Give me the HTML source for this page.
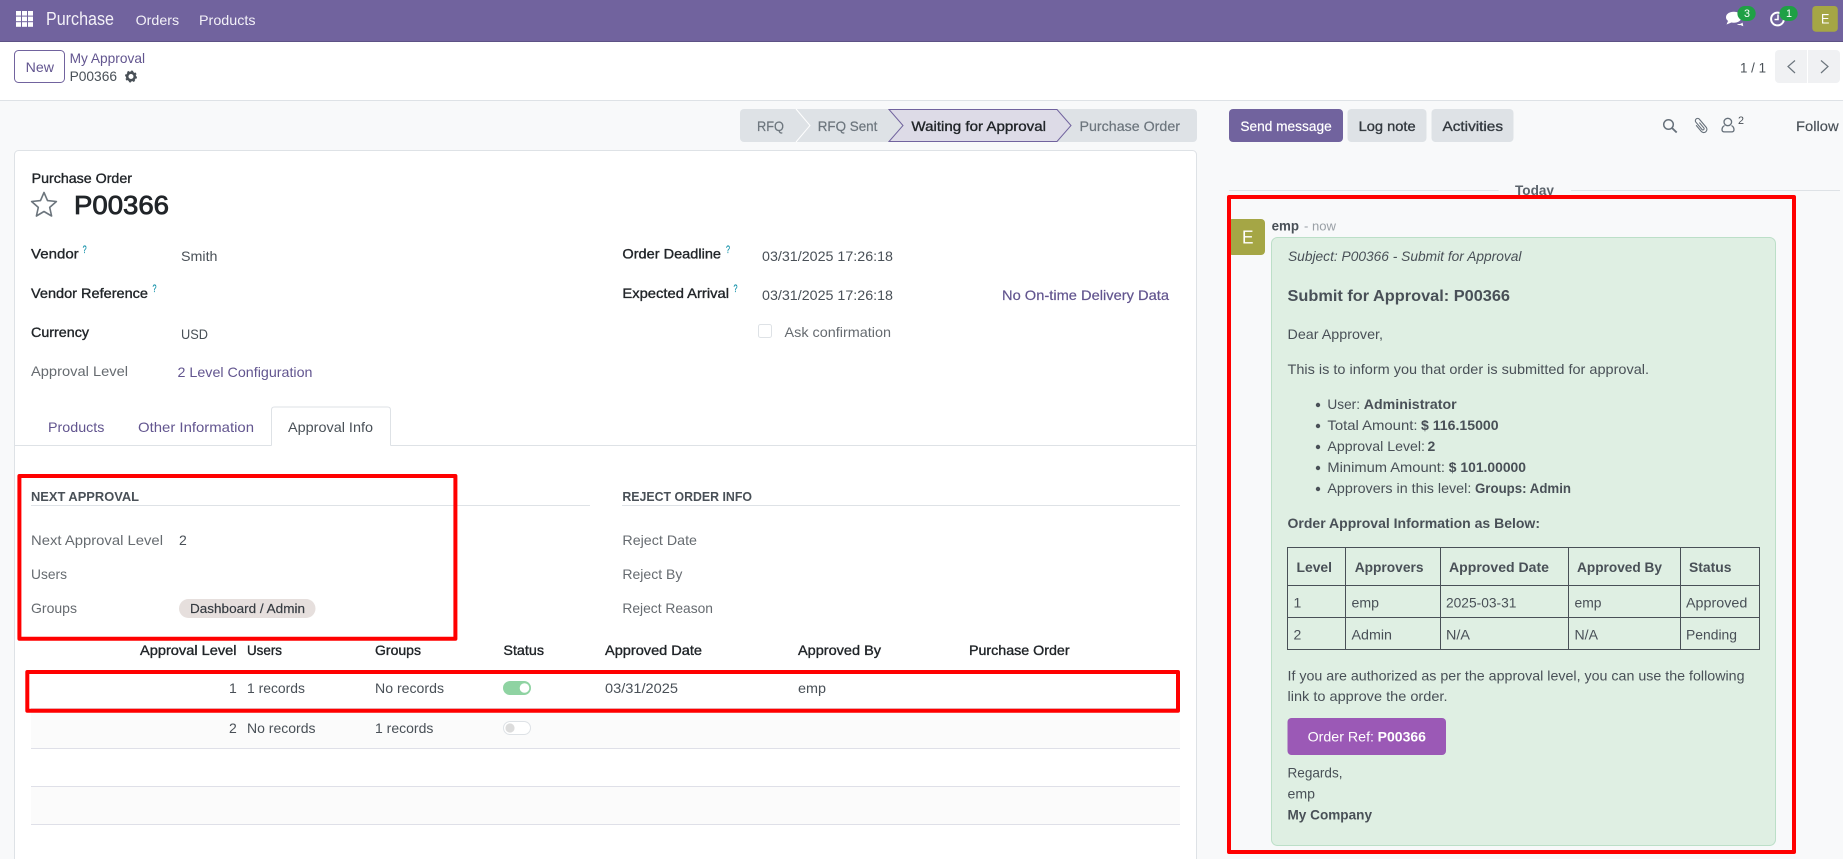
<!DOCTYPE html>
<html><head><meta charset="utf-8"><title>P00366</title>
<style>
html,body{margin:0;padding:0;width:1843px;height:859px;overflow:hidden;background:#f8f9fa}
svg{display:block;position:absolute;left:0;top:0}
text{font-family:"Liberation Sans",sans-serif;font-size:14px;fill:#495057;white-space:pre}
.m{fill:#212529;stroke:#212529;stroke-width:.35}
.g{fill:#666b70}
.l{fill:#62558f}
.h{font-weight:700}
.w{fill:#fff}
.n{fill:#f3f1f8}
.t{fill:#495057}
.b{font-weight:700;fill:#495057}
.q{font-size:11px;fill:#0f8fa8;stroke:#0f8fa8;stroke-width:.2}
</style></head><body>
<svg width="1843" height="859" viewBox="0 0 1843 859" xmlns="http://www.w3.org/2000/svg">
<rect width="1843" height="859" fill="#f8f9fa"/>
<!-- navbar -->
<rect width="1843" height="41" fill="#71639e"/>
<rect y="41" width="1843" height="1" fill="#5d5285"/>
<g fill="#fff">
<rect x="16" y="11" width="5" height="4.6"/><rect x="22" y="11" width="5" height="4.6"/><rect x="28" y="11" width="5" height="4.6"/>
<rect x="16" y="16.6" width="5" height="4.6"/><rect x="22" y="16.6" width="5" height="4.6"/><rect x="28" y="16.6" width="5" height="4.6"/>
<rect x="16" y="22.2" width="5" height="4.6"/><rect x="22" y="22.2" width="5" height="4.6"/><rect x="28" y="22.2" width="5" height="4.6"/>
</g>
<text class="n" x="46" y="25" style="font-size:18px" textLength="68" lengthAdjust="spacingAndGlyphs">Purchase</text>
<text class="n" x="135.6" y="25" textLength="43.5" lengthAdjust="spacingAndGlyphs">Orders</text>
<text class="n" x="199" y="25" textLength="56.5" lengthAdjust="spacingAndGlyphs">Products</text>
<!-- nav right icons -->
<g fill="#fff">
<ellipse cx="1733.8" cy="17.2" rx="7.8" ry="5.5"/>
<path d="M1728 21l-1.5 3.5 5-2z"/>
<path d="M1737 24c2.5.5 4.5-.3 5.5-1.5l.8 3.7-3-1.2c-1.3.3-2.5 0-3.3-1z"/>
</g>
<circle cx="1777.5" cy="19" r="6.4" fill="none" stroke="#fff" stroke-width="2"/>
<path d="M1778 14.5v5h-3.5" fill="none" stroke="#fff" stroke-width="1.5"/>
<rect x="1737.4" y="6" width="18.3" height="15" rx="7.5" fill="#1fa045"/>
<rect x="1779.4" y="6" width="18.3" height="15" rx="7.5" fill="#1fa045"/>
<text class="w" x="1744" y="17" style="font-size:11px" textLength="6" lengthAdjust="spacingAndGlyphs">3</text>
<text class="w" x="1786" y="17" style="font-size:11px" textLength="6" lengthAdjust="spacingAndGlyphs">1</text>
<rect x="1812.3" y="6" width="25.5" height="25.7" rx="3.5" fill="#a5a645"/>
<text class="w" x="1821" y="23.5" textLength="8.4" lengthAdjust="spacingAndGlyphs">E</text>
<!-- control panel -->
<rect y="42" width="1843" height="58" fill="#fff"/>
<rect y="100" width="1843" height="1" fill="#dee2e6"/>
<rect x="14.5" y="50.5" width="50" height="32" rx="4" fill="#fff" stroke="#71639e"/>
<text class="l" x="25.7" y="72" textLength="28.3" lengthAdjust="spacingAndGlyphs">New</text>
<text class="l" x="69.6" y="63" textLength="75.4" lengthAdjust="spacingAndGlyphs">My Approval</text>
<text class="t" x="69.6" y="81" textLength="47.4" lengthAdjust="spacingAndGlyphs">P00366</text>
<circle cx="131" cy="76.5" r="3.8" fill="none" stroke="#495057" stroke-width="2.6"/>
<circle cx="131" cy="76.5" r="5.2" fill="none" stroke="#495057" stroke-width="1.6" stroke-dasharray="2 2.08"/>
<text class="t" x="1740" y="72.5" textLength="26" lengthAdjust="spacingAndGlyphs">1 / 1</text>
<path d="M1775 54a4 4 0 0 1 4-4h28v33h-28a4 4 0 0 1-4-4z" fill="#f0f1f3"/>
<path d="M1808 50h28a4 4 0 0 1 4 4v25a4 4 0 0 1-4 4h-28z" fill="#f0f1f3"/>
<path d="M1795 60.5l-7 6 7 6.5" fill="none" stroke="#6c757d" stroke-width="1.2"/>
<path d="M1821 60.5l7 6-7 6.5" fill="none" stroke="#6c757d" stroke-width="1.2"/>
<!-- statusbar -->
<rect x="740" y="109" width="457" height="33" rx="4" fill="#dee2e6"/>
<path d="M796 109l14 16.5-14 16.5" fill="none" stroke="#fff" stroke-width="1"/>
<polygon points="889,109.5 1057,109.5 1071,125.5 1057,141.5 889,141.5 903,125.5" fill="#dddbe7" stroke="#71639e" stroke-width="1"/>
<text x="757" y="131" style="fill:#6c757d;stroke:#6c757d;stroke-width:.2" textLength="27" lengthAdjust="spacingAndGlyphs">RFQ</text>
<text x="817.7" y="131" style="fill:#6c757d;stroke:#6c757d;stroke-width:.2" textLength="59.7" lengthAdjust="spacingAndGlyphs">RFQ Sent</text>
<text class="m" x="911.4" y="131" textLength="134.6" lengthAdjust="spacingAndGlyphs">Waiting for Approval</text>
<text x="1079.5" y="131" style="fill:#6c757d;stroke:#6c757d;stroke-width:.2" textLength="100.5" lengthAdjust="spacingAndGlyphs">Purchase Order</text>
<!-- sheet -->
<rect x="14.5" y="150.5" width="1182" height="740" rx="4" fill="#fff" stroke="#dee2e6"/>
<text class="m" x="31.6" y="183" textLength="100.4" lengthAdjust="spacingAndGlyphs">Purchase Order</text>
<polygon points="44,192.5 47.5,200.6 56.4,201.5 49.7,207.4 51.6,216 44,211.5 36.4,216 38.3,207.4 31.6,201.5 40.5,200.6" fill="none" stroke="#6c757d" stroke-width="1.6" stroke-linejoin="round"/>
<text x="74" y="214" style="font-size:26px;fill:#212529;stroke:#212529;stroke-width:.8" textLength="95" lengthAdjust="spacingAndGlyphs">P00366</text>
<text class="m" x="31" y="258.7" textLength="47.7" lengthAdjust="spacingAndGlyphs">Vendor</text><text class="q" x="82.6" y="253" textLength="4" lengthAdjust="spacingAndGlyphs">?</text>
<text class="t" x="181" y="261" textLength="36.5" lengthAdjust="spacingAndGlyphs">Smith</text>
<text class="m" x="31" y="298" textLength="117" lengthAdjust="spacingAndGlyphs">Vendor Reference</text><text class="q" x="152.5" y="292" textLength="4" lengthAdjust="spacingAndGlyphs">?</text>
<text class="m" x="31" y="337" textLength="58" lengthAdjust="spacingAndGlyphs">Currency</text>
<text class="t" x="181" y="339" textLength="27" lengthAdjust="spacingAndGlyphs">USD</text>
<text class="g" x="31" y="376" textLength="97" lengthAdjust="spacingAndGlyphs">Approval Level</text>
<text class="l" x="177.5" y="377" textLength="135" lengthAdjust="spacingAndGlyphs">2 Level Configuration</text>
<text class="m" x="622.4" y="258.7" textLength="98.6" lengthAdjust="spacingAndGlyphs">Order Deadline</text><text class="q" x="726" y="253" textLength="4" lengthAdjust="spacingAndGlyphs">?</text>
<text class="t" x="762" y="261" textLength="131" lengthAdjust="spacingAndGlyphs">03/31/2025 17:26:18</text>
<text class="m" x="622.4" y="298" textLength="106.6" lengthAdjust="spacingAndGlyphs">Expected Arrival</text><text class="q" x="733.5" y="292" textLength="4" lengthAdjust="spacingAndGlyphs">?</text>
<text class="t" x="762" y="300" textLength="131" lengthAdjust="spacingAndGlyphs">03/31/2025 17:26:18</text>
<text class="l" style="stroke:#62558f;stroke-width:.2" x="1002" y="300" textLength="167" lengthAdjust="spacingAndGlyphs">No On-time Delivery Data</text>
<rect x="758.5" y="324.5" width="13" height="13" rx="2" fill="#fff" stroke="#dee2e6"/>
<text class="g" x="784.5" y="337" textLength="106.5" lengthAdjust="spacingAndGlyphs">Ask confirmation</text>
<!-- tabs -->
<rect x="15" y="445" width="1181" height="1" fill="#dee2e6"/>
<path d="M271.5 446V410q0-3 3-3H387.5q3 0 3 3V446" fill="#fff" stroke="none"/>
<path d="M271.5 445.5V410q0-3 3-3H387.5q3 0 3 3V445.5" fill="none" stroke="#dee2e6"/>
<text class="l" x="48" y="432" textLength="56.4" lengthAdjust="spacingAndGlyphs">Products</text>
<text class="l" x="138" y="432" textLength="116" lengthAdjust="spacingAndGlyphs">Other Information</text>
<text class="t" x="288" y="432" textLength="85" lengthAdjust="spacingAndGlyphs">Approval Info</text>
<!-- groups -->
<text class="b" x="31" y="501" style="font-size:13px" textLength="108" lengthAdjust="spacingAndGlyphs">NEXT APPROVAL</text>
<rect x="31" y="505" width="559" height="1" fill="#dee2e6"/>
<text class="g" x="31" y="545" textLength="132" lengthAdjust="spacingAndGlyphs">Next Approval Level</text>
<text class="t" x="179" y="545" textLength="7.8" lengthAdjust="spacingAndGlyphs">2</text>
<text class="g" x="31" y="579" textLength="36" lengthAdjust="spacingAndGlyphs">Users</text>
<text class="g" x="31" y="613" textLength="46" lengthAdjust="spacingAndGlyphs">Groups</text>
<rect x="179" y="599" width="136.5" height="19" rx="9.5" fill="#e6dfdd"/>
<text x="190" y="613" style="font-size:13px;fill:#343a40;stroke:#343a40;stroke-width:.15" textLength="115" lengthAdjust="spacingAndGlyphs">Dashboard / Admin</text>
<text class="b" x="622.4" y="501" style="font-size:13px" textLength="129.6" lengthAdjust="spacingAndGlyphs">REJECT ORDER INFO</text>
<rect x="622" y="505" width="558" height="1" fill="#dee2e6"/>
<text class="g" x="622.4" y="545" textLength="74.6" lengthAdjust="spacingAndGlyphs">Reject Date</text>
<text class="g" x="622.4" y="579" textLength="60" lengthAdjust="spacingAndGlyphs">Reject By</text>
<text class="g" x="622.4" y="613" textLength="90.6" lengthAdjust="spacingAndGlyphs">Reject Reason</text>
<!-- list -->
<text class="m" x="140" y="655" textLength="96.5" lengthAdjust="spacingAndGlyphs">Approval Level</text>
<text class="m" x="247" y="655" textLength="35" lengthAdjust="spacingAndGlyphs">Users</text>
<text class="m" x="375" y="655" textLength="46" lengthAdjust="spacingAndGlyphs">Groups</text>
<text class="m" x="503.4" y="655" textLength="40.6" lengthAdjust="spacingAndGlyphs">Status</text>
<text class="m" x="605" y="655" textLength="97" lengthAdjust="spacingAndGlyphs">Approved Date</text>
<text class="m" x="798" y="655" textLength="83" lengthAdjust="spacingAndGlyphs">Approved By</text>
<text class="m" x="969" y="655" textLength="100.6" lengthAdjust="spacingAndGlyphs">Purchase Order</text>
<rect x="31" y="709" width="1149" height="39" fill="#fbfbfb"/>
<rect x="31" y="786" width="1149" height="38" fill="#fbfbfb"/>
<rect x="31" y="708" width="1149" height="1" fill="#dfe0e8"/>
<rect x="31" y="748" width="1149" height="1" fill="#dfe0e8"/>
<rect x="31" y="786" width="1149" height="1" fill="#dfe0e8"/>
<rect x="31" y="824" width="1149" height="1" fill="#dfe0e8"/>
<text class="t" x="229" y="693" textLength="7.8" lengthAdjust="spacingAndGlyphs">1</text>
<text class="t" x="247" y="693" textLength="58" lengthAdjust="spacingAndGlyphs">1 records</text>
<text class="t" x="375" y="693" textLength="69" lengthAdjust="spacingAndGlyphs">No records</text>
<rect x="503" y="681" width="28" height="14" rx="7" fill="#8fd3a2"/>
<circle cx="524.5" cy="688" r="4.8" fill="#fff"/>
<text class="t" x="605" y="693" textLength="73" lengthAdjust="spacingAndGlyphs">03/31/2025</text>
<text class="t" x="798" y="693" textLength="28" lengthAdjust="spacingAndGlyphs">emp</text>
<text class="t" x="229" y="733" textLength="7.8" lengthAdjust="spacingAndGlyphs">2</text>
<text class="t" x="247" y="733" textLength="68.5" lengthAdjust="spacingAndGlyphs">No records</text>
<text class="t" x="375" y="733" textLength="58.4" lengthAdjust="spacingAndGlyphs">1 records</text>
<rect x="503.5" y="721.5" width="27" height="13" rx="6.5" fill="#fff" stroke="#dee2e6"/>
<circle cx="510" cy="728" r="4.6" fill="#dcdcdc"/>
<!-- chatter -->
<rect x="1229" y="109" width="114" height="33" rx="4" fill="#71639e"/>
<text class="w" x="1240.4" y="131" style="stroke:#fff;stroke-width:.2" textLength="91.3" lengthAdjust="spacingAndGlyphs">Send message</text>
<rect x="1347.5" y="109" width="79" height="33" rx="4" fill="#dee2e6"/>
<text class="m" style="fill:#343a40;stroke:#343a40" x="1358.6" y="131" textLength="57" lengthAdjust="spacingAndGlyphs">Log note</text>
<rect x="1431.5" y="109" width="82" height="33" rx="4" fill="#dee2e6"/>
<text class="m" style="fill:#343a40;stroke:#343a40" x="1442.5" y="131" textLength="60.5" lengthAdjust="spacingAndGlyphs">Activities</text>
<circle cx="1668.5" cy="124.5" r="4.8" fill="none" stroke="#66707a" stroke-width="1.5"/>
<path d="M1672 128l4.7 4.5" stroke="#66707a" stroke-width="1.9"/>
<g transform="translate(1700.5 125.5) rotate(-40)"><path d="M-3.2 -3V5a3.2 3.2 0 0 0 6.4 0V-5.5a2.3 2.3 0 0 0-4.6 0V4a1.2 1.2 0 0 0 2.4 0V-3" fill="none" stroke="#66707a" stroke-width="1.1"/></g>
<ellipse cx="1727.8" cy="122" rx="3.8" ry="3.7" fill="none" stroke="#66707a" stroke-width="1.3"/>
<path d="M1724.5 125.5q-2.5 1.5-2.5 4q0 2.4 2.4 2.4h7.2q2.4 0 2.4-2.4q0-2.5-2.5-4" fill="none" stroke="#66707a" stroke-width="1.3"/>
<text class="t" x="1738" y="124" style="font-size:11px" textLength="6" lengthAdjust="spacingAndGlyphs">2</text>
<text class="t" x="1796" y="131" style="stroke:#495057;stroke-width:.15" textLength="42.6" lengthAdjust="spacingAndGlyphs">Follow</text>
<!-- Today -->
<rect x="1229" y="190" width="269.6" height="1" fill="#dee2e6"/>
<rect x="1571" y="190" width="269" height="1" fill="#dee2e6"/>
<text x="1515" y="195" style="font-weight:700;fill:#5b636b" textLength="39" lengthAdjust="spacingAndGlyphs">Today</text>
<!-- message -->
<rect x="1228" y="219" width="37" height="36" rx="4" fill="#a5a645"/>
<text class="w" x="1242" y="243.7" style="font-size:18px" textLength="11.5" lengthAdjust="spacingAndGlyphs">E</text>
<text class="b" x="1271.6" y="230.7" textLength="27.4" lengthAdjust="spacingAndGlyphs">emp</text>
<text x="1304" y="230.7" style="font-size:13px;fill:#9aa0a6" textLength="32" lengthAdjust="spacingAndGlyphs">- now</text>
<rect x="1271.5" y="237.5" width="504" height="608" rx="6" fill="#dfefe3" stroke="#bcdfc8"/>
<text class="t" x="1288" y="261" style="font-style:italic" textLength="233.5" lengthAdjust="spacingAndGlyphs">Subject: P00366 - Submit for Approval</text>
<text class="b" x="1287.5" y="301" style="font-size:16px" textLength="222.5" lengthAdjust="spacingAndGlyphs">Submit for Approval: P00366</text>
<text class="t" x="1287.5" y="339" textLength="95.5" lengthAdjust="spacingAndGlyphs">Dear Approver,</text>
<text class="t" x="1287.5" y="374" textLength="361.5" lengthAdjust="spacingAndGlyphs">This is to inform you that order is submitted for approval.</text>
<g fill="#495057"><circle cx="1318" cy="405" r="2.2"/><circle cx="1318" cy="426" r="2.2"/><circle cx="1318" cy="447" r="2.2"/><circle cx="1318" cy="468" r="2.2"/><circle cx="1318" cy="489" r="2.2"/></g>
<text class="t" x="1327.4" y="409" textLength="32.6" lengthAdjust="spacingAndGlyphs">User:</text>
<text class="b" x="1363.8" y="409" textLength="92.9" lengthAdjust="spacingAndGlyphs">Administrator</text>
<text class="t" x="1327.4" y="430" textLength="90.1" lengthAdjust="spacingAndGlyphs">Total Amount:</text>
<text class="b" x="1421" y="430" textLength="77.6" lengthAdjust="spacingAndGlyphs">$ 116.15000</text>
<text class="t" x="1327.4" y="451" textLength="97.6" lengthAdjust="spacingAndGlyphs">Approval Level:</text>
<text class="b" x="1427.5" y="451" textLength="7.8" lengthAdjust="spacingAndGlyphs">2</text>
<text class="t" x="1327.4" y="472" textLength="117.6" lengthAdjust="spacingAndGlyphs">Minimum Amount:</text>
<text class="b" x="1448.8" y="472" textLength="77.2" lengthAdjust="spacingAndGlyphs">$ 101.00000</text>
<text class="t" x="1327.4" y="493" textLength="143.9" lengthAdjust="spacingAndGlyphs">Approvers in this level:</text>
<text class="b" x="1475" y="493" textLength="96" lengthAdjust="spacingAndGlyphs">Groups: Admin</text>
<text class="b" x="1287.5" y="528" textLength="252.5" lengthAdjust="spacingAndGlyphs">Order Approval Information as Below:</text>
<g fill="none" stroke="#495057" stroke-width="1">
<rect x="1287.5" y="547.5" width="472" height="102"/>
<path d="M1287.5 585.5H1759.5M1287.5 617.5H1759.5M1345.5 547.5V649.5M1440.5 547.5V649.5M1568.5 547.5V649.5M1680.5 547.5V649.5"/>
</g>
<text class="b" x="1296.5" y="572" textLength="35.5" lengthAdjust="spacingAndGlyphs">Level</text>
<text class="b" x="1354.7" y="572" textLength="68.8" lengthAdjust="spacingAndGlyphs">Approvers</text>
<text class="b" x="1449" y="572" textLength="100" lengthAdjust="spacingAndGlyphs">Approved Date</text>
<text class="b" x="1577" y="572" textLength="85" lengthAdjust="spacingAndGlyphs">Approved By</text>
<text class="b" x="1689" y="572" textLength="42.5" lengthAdjust="spacingAndGlyphs">Status</text>
<text class="t" x="1293.5" y="607.3" textLength="7.8" lengthAdjust="spacingAndGlyphs">1</text>
<text class="t" x="1351.5" y="607.3" textLength="27.5" lengthAdjust="spacingAndGlyphs">emp</text>
<text class="t" x="1446" y="607.3" textLength="70.4" lengthAdjust="spacingAndGlyphs">2025-03-31</text>
<text class="t" x="1574.5" y="607.3" textLength="27" lengthAdjust="spacingAndGlyphs">emp</text>
<text class="t" x="1686" y="607.3" textLength="61.3" lengthAdjust="spacingAndGlyphs">Approved</text>
<text class="t" x="1293.5" y="639.3" textLength="7.8" lengthAdjust="spacingAndGlyphs">2</text>
<text class="t" x="1351.5" y="639.3" textLength="40.5" lengthAdjust="spacingAndGlyphs">Admin</text>
<text class="t" x="1446" y="639.3" textLength="24" lengthAdjust="spacingAndGlyphs">N/A</text>
<text class="t" x="1574.5" y="639.3" textLength="23.5" lengthAdjust="spacingAndGlyphs">N/A</text>
<text class="t" x="1686" y="639.3" textLength="51" lengthAdjust="spacingAndGlyphs">Pending</text>
<text class="t" x="1287.5" y="680.3" textLength="457" lengthAdjust="spacingAndGlyphs">If you are authorized as per the approval level, you can use the following</text>
<text class="t" x="1287.5" y="701" textLength="160" lengthAdjust="spacingAndGlyphs">link to approve the order.</text>
<rect x="1287.5" y="718" width="158.5" height="37" rx="4" fill="#9b59b6"/>
<text class="w" x="1307.6" y="741.7" textLength="66.4" lengthAdjust="spacingAndGlyphs">Order Ref:</text>
<text class="w" x="1377.6" y="741.7" style="font-weight:700" textLength="48.4" lengthAdjust="spacingAndGlyphs">P00366</text>
<text class="t" x="1287.5" y="777.3" textLength="55" lengthAdjust="spacingAndGlyphs">Regards,</text>
<text class="t" x="1287.5" y="798.3" textLength="27.5" lengthAdjust="spacingAndGlyphs">emp</text>
<text class="b" x="1287.5" y="819.3" textLength="84.5" lengthAdjust="spacingAndGlyphs">My Company</text>
<!-- red annotations -->
<g fill="none" stroke="#ff0000" stroke-width="4" stroke-linejoin="round">
<rect x="19.4" y="476" width="436" height="162.7"/>
<rect x="27.3" y="672" width="1150.7" height="38.7"/>
<rect x="1229" y="197" width="565" height="655"/>
</g>
</svg>
</body></html>
